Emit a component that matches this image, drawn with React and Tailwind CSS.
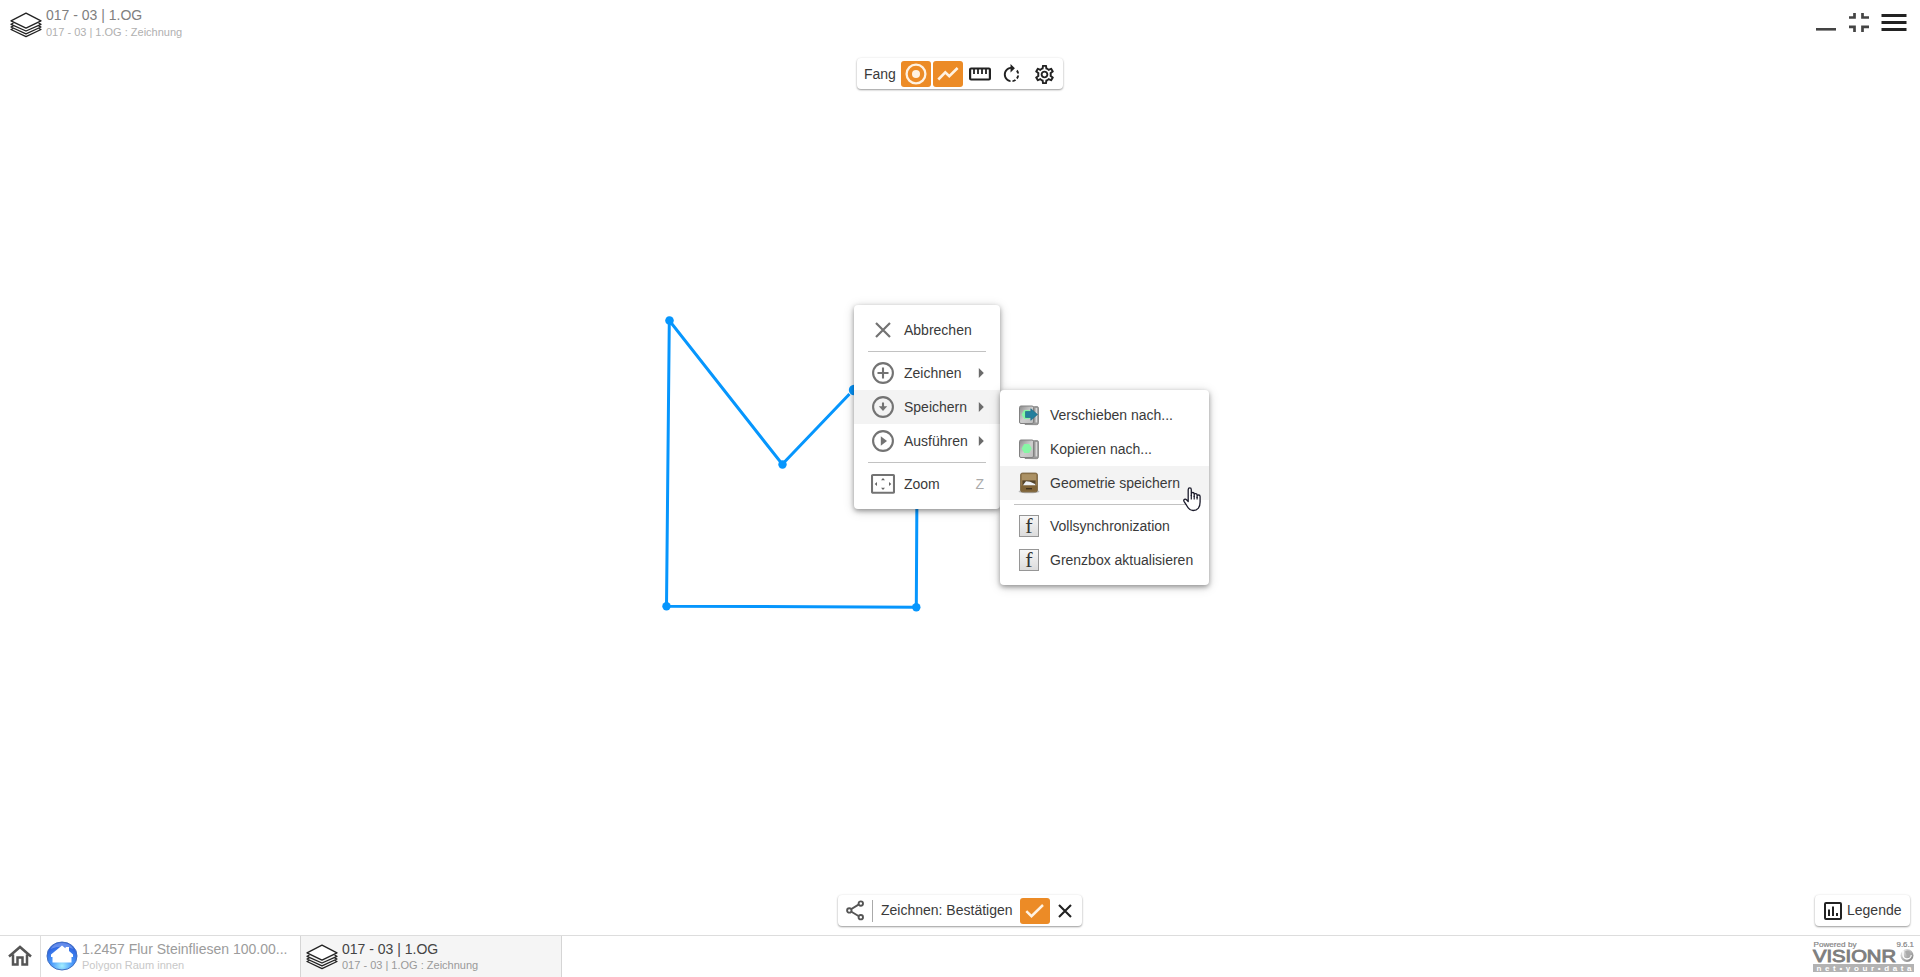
import React from "react";
import { MdRotateRight, MdOutlineSettings } from "react-icons/md";

function Layers() {
  return (
    <svg width="32" height="26" viewBox="0 0 32 26" fill="none" stroke="#222" strokeWidth="1.3" strokeLinejoin="round">
      <path d="M16 1.2 31 8.8 16 16.2 1 8.8Z" fill="#fff" />
      <path d="M3.4 11.1 1 12.3 16 19 31 12.3 28.6 11.1" />
      <path d="M3.4 13.9 1 15 16 21.8 31 15 28.6 13.9" />
      <path d="M3.4 16.4 1 17.5 16 24.6 31 17.5 28.6 16.4" />
    </svg>
  );
}

function Title({ title, sub, titleClass, subClass }) {
  return (
    <div className="min-w-0 flex-1 whitespace-nowrap">
      <div className={"truncate text-[14px] leading-[17px] " + titleClass}>{title}</div>
      <div className={"truncate text-[11px] leading-[15px] " + subClass}>{sub}</div>
    </div>
  );
}

function Header() {
  return (
    <header className="flex h-[58px] shrink-0 items-start justify-between">
      <div className="flex pl-[10px] pt-[7px]">
        <div className="mr-1 pt-[5px]"><Layers /></div>
        <Title title="017 - 03 | 1.OG" sub="017 - 03 | 1.OG : Zeichnung" titleClass="text-[#808080]" subClass="pt-px text-[#b0b0b0]" />
      </div>
      <div className="flex pr-[13px] pt-[12px]">
        <svg width="92" height="22" viewBox="0 0 92 22">
          <path d="M1 17.3h20" stroke="#444" strokeWidth="2.6" />
          <path d="M34 5.500h5.500V1M47.500 1v4.500H54M34 14.800h5.500V20M47.500 20v-5.200H54" fill="none" stroke="#444" strokeWidth="2.700" />
          <path d="M66.500 3.500h25M66.500 10.500h25M66.500 17.500h25" stroke="#222" strokeWidth="2.800" />
        </svg>
      </div>
    </header>
  );
}

const panel = "flex items-center rounded-[4px] bg-white shadow-[0_1px_2px_rgba(0,0,0,0.38),0_0_3px_rgba(0,0,0,0.06)]";

function SnapBar() {
  return (
    <div className={panel + " h-[31px] w-[206px] self-center pl-[7px] pt-px"}>
      <span className="w-[37px] text-[14px]">Fang</span>
      <span className="flex h-[26px] w-[30px] items-center justify-center rounded-[3px] bg-[#ec8b26]">
        <svg width="22" height="22" viewBox="0 0 22 22"><circle cx="11" cy="11" r="9.400" fill="none" stroke="#fff2e2" strokeWidth="2.300" /><circle cx="11" cy="11" r="4" fill="#fff2e2" /></svg>
      </span>
      <span className="ml-[2px] flex h-[26px] w-[30px] items-center justify-center rounded-[3px] bg-[#ec8b26]">
        <svg width="22" height="14" viewBox="0 0 22 14"><path d="M1.300 12.500 8.300 5.300 12.300 9.200 20.600 1" fill="none" stroke="#fff2e2" strokeWidth="2.600" /></svg>
      </span>
      <svg className="ml-[6px]" width="22" height="14" viewBox="0 0 22 14" fill="none" stroke="#222" strokeWidth="2.200"><rect x="1.100" y="1.500" width="19.800" height="11" rx="1" /><path d="M5 2v5M9 2v5M13 2v5M17 2v5" strokeWidth="1.800" /></svg>
      <MdRotateRight className="ml-[9px] text-[#222]" size={23} />
      <MdOutlineSettings className="ml-[10px] text-[#222]" size={23} />
    </div>
  );
}

const cCircle = <circle cx="12" cy="11" r="9.900" fill="none" stroke="#737373" strokeWidth="2.100" />;

const mainIcons = {
  cancel: <path d="M5 4 19 18M19 4 5 18" stroke="#737373" strokeWidth="2.200" />,
  draw: <>{cCircle}<path d="M12 5.500v11M6.500 11h11" stroke="#737373" strokeWidth="2.100" /></>,
  save: <>{cCircle}<path d="M12 6.500v5" stroke="#737373" strokeWidth="2.100" /><path d="M7.800 10.300h8.400L12 15Z" fill="#737373" /></>,
  run: <>{cCircle}<path d="M9.800 6.300 16 11 9.800 15.700Z" fill="#737373" /></>,
  zoom: <>
    <rect x="1" y="2" width="22" height="17.800" rx="1" fill="none" stroke="#737373" strokeWidth="2.100" />
    <path d="M10 7.200h4L12 5ZM10 14.800h4L12 17ZM6 8.900v4L3.700 10.900ZM18 8.900v4L20.300 10.900Z" fill="#666" />
  </>,
};

function Pages({ arrow }) {
  return (
    <svg className="overflow-visible" width="20" height="21" viewBox="0 0 20 21">
      <defs>
        <linearGradient id="page" x2="1" y2="1"><stop stopColor="#8a8a8a" /><stop offset=".5" stopColor="#cecece" /><stop offset="1" stopColor="#bdbdbd" /></linearGradient>
      </defs>
      <path d="M6 2.500 17.800 1.500q1.700 0 1.700 1.700v14.500q0 2-2 2L6 19.500Z" fill="#9a9a9a" stroke="#808080" strokeWidth=".8" />
      <path d="M16.500 3h1.700v14.500h-1.700Z" fill="#d8d8d8" />
      <rect x=".5" y="1" width="14" height="17.500" rx="1.500" fill="url(#page)" stroke="#818181" />
      <path d="M5.200 5h5l2.600 4.500-2.600 4.500h-5L2.600 9.500Z" fill="#87f7a5" />
      {arrow && <path d="M6.500 6.500h5.300V3.700l6.700 5.800-6.700 5.800V12.500H6.500Z" fill="#247f9d" stroke="#17647f" strokeWidth=".6" />}
    </svg>
  );
}

function Cabinet() {
  return (
    <svg className="overflow-visible" width="20" height="22" viewBox="0 0 20 22">
      <ellipse cx="10" cy="19.500" rx="10.500" ry="1.700" fill="#bbb" />
      <rect x="1.500" y="1" width="17" height="19" rx="2" fill="#94784c" stroke="#74603f" strokeWidth=".8" />
      <path d="M3 2.200h14v6H3Z" fill="#ab9164" />
      <path d="M3.500 8.500h13v5h-13Z" fill="#55452c" />
      <path d="m4.500 12.500 2.500-3.300 4 .5 5 2.300.5 1.500H4Z" fill="#eef1f6" />
      <path d="M2 13.500h16v5.800H2Z" fill="#806438" />
      <path d="M7 16.700h6" stroke="#3d2f1c" strokeWidth="1.300" />
    </svg>
  );
}

function Func() {
  return (
    <span className="flex h-[22px] w-[20px] items-center justify-center border border-[#969696] bg-linear-to-b from-[#f7f7f7] to-[#dcdcdc] font-['Liberation_Serif',serif] text-[22px] leading-[20px] text-[#333]">f</span>
  );
}

function MainItem({ icon, label, sub, hint, active }) {
  return (
    <div className={"flex h-[34px] items-center pl-[17px] pr-[16px] " + (active ? "bg-[#f3f3f3]" : "")}>
      <svg width="24" height="22" viewBox="0 0 24 22">{mainIcons[icon]}</svg>
      <span className="ml-[9px] flex-1 text-[14px]">{label}</span>
      {sub && <svg width="6" height="10" viewBox="0 0 6 10"><path d="M.8 0 5.800 5 .8 10Z" fill="#6b6b6b" /></svg>}
      {hint && <span className="text-[14px] text-[#aaa]">{hint}</span>}
    </div>
  );
}

function SubItem({ icon, label, active }) {
  return (
    <div className={"flex h-[34px] items-center pl-[19px] " + (active ? "bg-[#f3f3f3]" : "")}>
      <span className="flex w-[22px]">{icon}</span>
      <span className="ml-[9px] whitespace-nowrap text-[14px]">{label}</span>
    </div>
  );
}

const Divider = () => <div className="mx-[14px] my-[4px] h-px bg-[#c2c2c2]" />;

const menu = "absolute rounded-[4px] bg-white py-2 shadow-[0_2px_5px_rgba(0,0,0,0.36),0_2px_12px_rgba(0,0,0,0.16)] ";

function Menus() {
  return (
    <>
      <div className={menu + "left-[854px] top-[305px] w-[146px]"}>
        <MainItem icon="cancel" label="Abbrechen" />
        <Divider />
        <MainItem icon="draw" label="Zeichnen" sub />
        <MainItem icon="save" label="Speichern" sub active />
        <MainItem icon="run" label="Ausführen" sub />
        <Divider />
        <MainItem icon="zoom" label="Zoom" hint="Z" />
      </div>
      <div className={menu + "left-[1000px] top-[390px] w-[209px]"}>
        <SubItem icon={<Pages arrow />} label="Verschieben nach..." />
        <SubItem icon={<Pages />} label="Kopieren nach..." />
        <SubItem icon={<Cabinet />} label="Geometrie speichern" active />
        <Divider />
        <SubItem icon={<Func />} label="Vollsynchronization" />
        <SubItem icon={<Func />} label="Grenzbox aktualisieren" />
      </div>
      <svg className="absolute left-[1183px] top-[487px]" width="19" height="25" viewBox="0 0 19 25">
        <path d="M5.200 14.500V2.700C5.200.3 8.300.3 8.300 2.700V8.500 6.900c0-1.900 2.900-1.800 2.900 0V9.500 7.900c0-1.900 2.900-1.700 2.900 0V10.500 9.200c0-1.700 3-1.600 3 .2V15c0 5-2.300 8.500-7 8.500-4 0-5-2.300-6.300-4.800L1 14.300c-.9-1.700 1.200-2.800 2.500-1.500Z" fill="#fff" stroke="#1b1b2b" strokeWidth="1.300" strokeLinejoin="round" />
        <path d="M8.300 8v4.500M11.200 9v3.500M14.100 10v2.500" stroke="#1b1b2b" strokeWidth="1.200" />
      </svg>
    </>
  );
}

function Polygon() {
  return (
    <svg className="absolute left-[655px] top-[305px]" width="280" height="315" viewBox="655 305 280 315">
      <path d="M849.500 394 782.300 464.300 669.300 320.500 666.500 606.200 916.300 607.200 917 480" fill="none" stroke="#0696fd" strokeWidth="3" />
      <g fill="#0696fd">
        <circle cx="669.500" cy="320.500" r="4.300" />
        <circle cx="782.500" cy="464.500" r="4.200" />
        <circle cx="666.500" cy="606.300" r="4.200" />
        <circle cx="916.300" cy="607.300" r="4.200" />
        <circle cx="854" cy="390" r="5.200" />
      </g>
    </svg>
  );
}

function BottomBar() {
  return (
    <div className="grid h-[31px] shrink-0 grid-cols-[1fr_auto_1fr]">
      <div />
      <div className={panel + " w-[244px] pl-[8px]"}>
        <svg width="18" height="21" viewBox="0 0 18 21" fill="none" stroke="#555" strokeWidth="1.900">
          <path d="M5 9.300 12.500 4.600M5 11.500 12.500 16" />
          <circle cx="3.300" cy="10.400" r="2.200" /><circle cx="14.800" cy="3.600" r="2.200" /><circle cx="14.800" cy="17.200" r="2.200" />
        </svg>
        <span className="ml-[8px] h-[22px] w-px bg-[#aaa]" />
        <span className="ml-[8px] w-[139px] whitespace-nowrap text-[14px]">Zeichnen: Bestätigen</span>
        <span className="flex h-[26px] w-[30px] items-center justify-center rounded-[3px] bg-[#ec8b26]">
          <svg width="20" height="14" viewBox="0 0 20 14"><path d="m1.300 7.200 5.200 5L18 1" fill="none" stroke="#fff2e2" strokeWidth="2.500" /></svg>
        </span>
        <svg className="ml-[8px]" width="14" height="14" viewBox="0 0 14 14"><path d="m1 1 12 12M13 1 1 13" stroke="#222" strokeWidth="2.100" /></svg>
      </div>
      <div className={panel + " mr-[10px] w-[95px] justify-self-end pl-[9px]"}>
        <svg width="18" height="18" viewBox="0 0 18 18" fill="none" stroke="#222" strokeWidth="2"><rect x="1" y="1" width="16" height="16" rx="1" /><path d="M5 7.500V14M9 4.500V14M13 11v3" /></svg>
        <span className="ml-[5px] text-[14px]">Legende</span>
      </div>
    </div>
  );
}

function Logo() {
  return (
    <svg width="108" height="41" viewBox="1812 936 108 41">
      <defs><linearGradient id="orb" x2="1" y2="1"><stop stopColor="#f2f2f2" /><stop offset="1" stopColor="#777" /></linearGradient></defs>
      <g className="font-['Liberation_Sans',sans-serif]" fill="#858585">
        <text x="1813.500" y="946.700" fontSize="8" textLength="43" lengthAdjust="spacingAndGlyphs" stroke="#858585" strokeWidth=".2">Powered by</text>
        <text x="1896.500" y="946.700" fontSize="8" textLength="17.500" lengthAdjust="spacingAndGlyphs" stroke="#858585" strokeWidth=".2">9.6.1</text>
        <text x="1813" y="961.700" fontSize="16" textLength="83" lengthAdjust="spacingAndGlyphs" fill="#7f7f7f" stroke="#7f7f7f" strokeWidth=".9">VISIONR</text>
      </g>
      <circle cx="1907" cy="955.500" r="6.500" fill="url(#orb)" />
      <path d="M1903 950.500v4.500a4 4 0 0 0 8 0" fill="none" stroke="#fff" strokeWidth="1.500" />
      <path d="M1905 951.500q5-3 5.500 2.500t-3.500 2Z" fill="#aaa" />
      <path d="M1813 964h101v8h-101Z" fill="#b3b3b3" />
      <text className="font-['Liberation_Sans',sans-serif]" x="1816.500" y="970.700" fontSize="8" fontWeight="700" textLength="95" fill="#fff">net•your•data</text>
    </svg>
  );
}

function TaskBar() {
  return (
    <footer className="flex h-[42px] shrink-0 border-t border-[#ddd]">
      <div className="flex w-[41px] border-r border-[#ddd] pl-[8px] pt-[9px]">
        <svg width="24" height="22" viewBox="0 0 24 22"><path d="M1 11.500 12 2 23 11.500M5 9.500v10h4.500v-7h5v7H19V9.500" fill="none" stroke="#555" strokeWidth="2.500" /></svg>
      </div>
      <div className="flex w-[259px] pl-[5px] pr-[10px]">
        <svg className="mr-[4px] mt-[5px] shrink-0" width="32" height="31" viewBox="0 0 32 31">
          <defs><radialGradient id="ball" cx=".5" cy=".85" r=".85"><stop stopColor="#a4efff" /><stop offset=".4" stopColor="#4b9bfb" /><stop offset="1" stopColor="#2450d8" /></radialGradient></defs>
          <ellipse cx="16" cy="15" rx="15" ry="14" fill="url(#ball)" stroke="#416fc0" />
          <path d="M4.500 8Q8 1.800 16 1.800T27.500 8Q22 5.500 16 5.500T4.500 8Z" fill="#b9d2ff" opacity=".4" />
          <path d="M16 4.500 19.500 7.200V6H23v4L27 13.500V16h-1.500v5.500h-19V16H5v-2.500Z" fill="#fff" />
        </svg>
        <div className="flex min-w-0 flex-1 pt-[5px]"><Title title="1.2457 Flur Steinfliesen 100.00..." sub="Polygon Raum innen" titleClass="text-[#9c9c9c]" subClass="text-[#c8c8c8]" /></div>
      </div>
      <div className="flex w-[262px] border-x border-[#d5d5d5] bg-[#f5f5f5] pl-[5px] pt-[5px]">
        <div className="mr-1 pt-[3px]"><Layers /></div>
        <Title title="017 - 03 | 1.OG" sub="017 - 03 | 1.OG : Zeichnung" titleClass="text-[#444]" subClass="text-[#999]" />
      </div>
      <div className="ml-auto"><Logo /></div>
    </footer>
  );
}

export default function App() {
  return (
    <div className="relative flex h-[977px] w-[1920px] flex-col overflow-hidden bg-white font-['Liberation_Sans',Arial,sans-serif] text-[#3a3a3a]">
      <Header />
      <SnapBar />
      <main className="flex-1">
        <Polygon />
        <Menus />
      </main>
      <div className="pb-[9px]"><BottomBar /></div>
      <TaskBar />
    </div>
  );
}
